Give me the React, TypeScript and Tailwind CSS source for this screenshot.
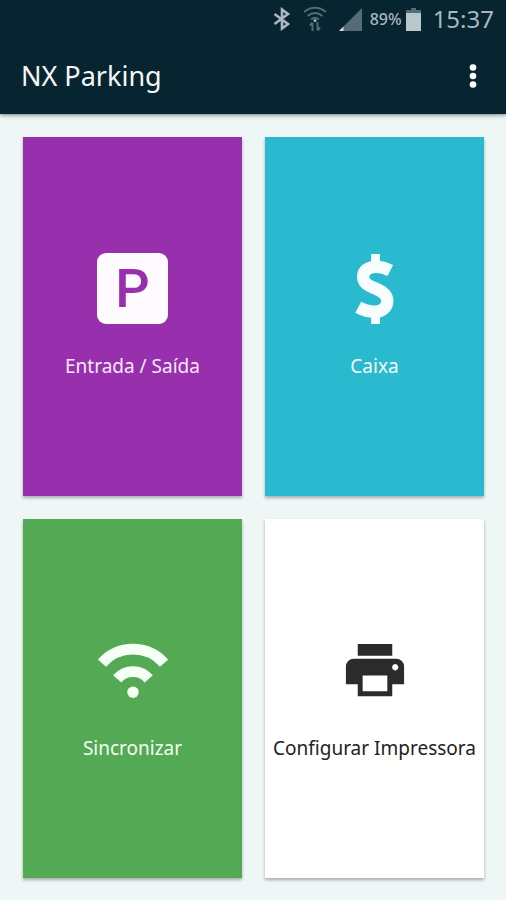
import type { ReactNode } from "react";

const ParkingIcon = () => (
    <span aria-hidden="true" className="flex size-[71px] items-center justify-center rounded-[9px] bg-[#fdfbfd] font-[Roboto,sans-serif] text-[54px] font-medium leading-none text-[#982fac]">
        P
    </span>
);

const MoneyIcon = () => (
    <svg aria-hidden="true" viewBox="0 0 72 72" className="size-[71px]" fill="none" stroke="currentColor">
        <path strokeWidth="12.5" d="M52 17.8C47 15.2 42.5 14 38 14C29.5 14 24.5 18 24.5 24C24.5 31.5 31 33.5 37 36C43.500 38.700 49 42 49 48.500C49 55.500 43.500 59.500 36 59.500C30 59.500 25 58 19.500 55" />
        <path strokeWidth="9" d="M37 1V12M37 60V72" />
    </svg>
);

const WifiIcon = () => (
    <svg aria-hidden="true" viewBox="0 0 72 72" className="size-[71px]" fill="none" stroke="currentColor" strokeWidth="11">
        <path d="M5 28.5A42 42 0 0 1 68 28.5" />
        <path d="M20.5 44.5A21 21 0 0 1 52.5 44.5" />
        <circle cx="36.5" cy="58" r="5.8" fill="currentColor" stroke="none" />
    </svg>
);

const PrinterIcon = () => (
    <svg aria-hidden="true" viewBox="0 0 72 72" className="size-[71px]" fill="#2b2b2b">
        <path d="M19 9h35v12H19z" />
        <path
            fillRule="evenodd"
            d="M15 24h43a8 8 0 0 1 8 8v18H54v12H19V50H7V32a8 8 0 0 1 8-8zM24 41v16h25V41zM57 29.5a3.2 3.2 0 1 0 0.01 0z"
        />
    </svg>
);

const StatusBar = () => (
    <div className="flex h-[38px] items-center justify-end pr-3 text-[#a9b8be]">
        <svg aria-hidden="true" viewBox="0 0 18 24" className="mr-3 h-6 w-[18px]" fill="none" stroke="currentColor" strokeWidth="2.6">
            <path d="M1.5 7L15 17L9 21.5V2.5L15 7L1.5 17" />
        </svg>
        <svg aria-hidden="true" viewBox="0 0 24 26" className="mr-3 h-[26px] w-6" fill="none" stroke="#536c75" strokeWidth="2">
            <path d="M1 6Q12-2.5 23 6M4.5 10Q12 4 19.5 10M8 13.5Q12 10 16 13.5" />
            <path d="M9.5 25V17M7 19.5L9.5 16.5M14.5 16V24M17 21.5L14.5 24.5" />
            <circle cx="12" cy="14.5" r="1.5" fill="#a9b8be" stroke="none" />
        </svg>
        <svg aria-hidden="true" viewBox="0 0 23 23" className="mr-2 size-[23px]">
            <path d="M23 0V23H0z" fill="#536c75" />
            <path d="M4.5 18.5V23H0z" fill="#d5dddf" />
        </svg>
        <span className="mr-1 text-base font-medium">89%</span>
        <svg aria-hidden="true" viewBox="0 0 15 23" className="mr-3 h-[23px] w-[15px]">
            <path d="M5 0h5v2h5v3H0V2h5z" fill="#536c75" />
            <path d="M0 5h15v18H0z" fill="#bac7ca" />
        </svg>
        <span className="text-2xl">15:37</span>
    </div>
);

type TileProps = {
    label: string;
    icon: ReactNode;
    className: string;
};

const Tile = ({ label, icon, className }: TileProps) => (
    <button
        type="button"
        className={`flex min-w-0 cursor-pointer flex-col items-center justify-center gap-7 shadow-[0_2px_3px_rgba(0,0,0,0.3)] ${className}`}
    >
        {icon}
        <span className="whitespace-nowrap text-[19px] leading-7">{label}</span>
    </button>
);

const App = () => {
    return (
        <div className="flex min-h-screen flex-col bg-[#eff6f6] font-['Noto_Sans',sans-serif]">
            <header className="bg-[#062530] shadow-[0_1px_4px_rgba(0,0,0,0.5)]">
                <StatusBar />
                <div className="flex h-[76px] items-center justify-between px-[21px]">
                    <h1 className="text-[27px] leading-9 text-[#f5f7f7]">NX Parking</h1>
                    <button type="button" aria-label="Mais opções" className="flex h-12 w-6 cursor-pointer items-center justify-center">
                        <svg aria-hidden="true" viewBox="0 0 8 24" className="h-6 w-2" fill="#ffffff">
                            <circle cx="4" cy="3.5" r="3.3" />
                            <circle cx="4" cy="12" r="3.3" />
                            <circle cx="4" cy="20.5" r="3.3" />
                        </svg>
                    </button>
                </div>
            </header>
            <main className="grid flex-1 grid-cols-2 grid-rows-2 gap-x-[23px] gap-y-[23px] pb-[22px] pl-[23px] pr-[22px] pt-[23px]">
                <Tile label="Entrada / Saída" icon={<ParkingIcon />} className="bg-[#982fac] text-[#f7e9fa]" />
                <Tile label="Caixa" icon={<MoneyIcon />} className="bg-[#29bacf] text-[#f7fdfd]" />
                <Tile label="Sincronizar" icon={<WifiIcon />} className="bg-[#54a955] text-[#f5fff3]" />
                <Tile label="Configurar Impressora" icon={<PrinterIcon />} className="bg-white text-[#222222]" />
            </main>
        </div>
    );
};

export default App;
